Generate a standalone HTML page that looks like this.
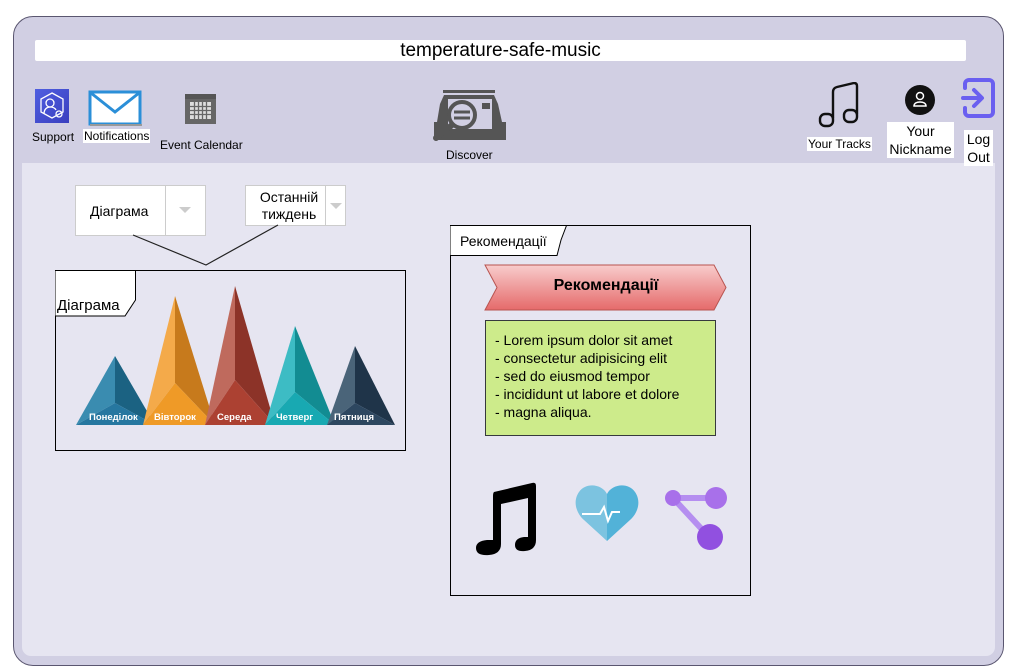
<!DOCTYPE html>
<html><head><meta charset="utf-8"><style>
*{margin:0;padding:0;box-sizing:border-box}
body{width:1010px;height:667px;background:#fff;position:relative;overflow:hidden;font-family:"Liberation Sans",Arial,sans-serif;color:#000}
.a{position:absolute}
.lbl{position:absolute;font-size:12px;white-space:nowrap}
</style></head><body>
<div class="a" style="left:13px;top:16px;width:991px;height:650px;background:#d1cfe3;border:1px solid #5a5670;border-radius:20px"></div>
<div class="a" style="left:22px;top:163px;width:973px;height:493px;background:#e6e5f1;border-radius:0 0 9px 9px"></div>
<div class="a" style="left:35px;top:40px;width:931px;height:21px;background:#fff;border-radius:2px;text-align:center;font-size:19px;line-height:21px">temperature-safe-music</div>

<!-- Support icon -->
<div class="a" style="left:35px;top:89px;width:34px;height:34px;background:linear-gradient(135deg,#4f5fe0,#3a3fbf)"></div>
<svg class="a" style="left:35px;top:89px" width="34" height="34" viewBox="0 0 34 34" fill="none" stroke="#fff" stroke-width="1.3"><polygon points="17,4 28,10 28,23 17,29 6,23 6,10"/><circle cx="15" cy="14" r="4"/><path d="M9 25c0-5 3-7 6-7s5 1 6 3"/><circle cx="24" cy="25" r="3"/></svg>
<div class="lbl" style="left:32px;top:130px">Support</div>
<!-- envelope -->
<svg class="a" style="left:88px;top:90px" width="54" height="36" viewBox="0 0 54 36"><rect x="2" y="2" width="50" height="32" fill="#fff" stroke="#2b8fd8" stroke-width="3"/><path d="M3 3 L27 22 L51 3" fill="none" stroke="#2b8fd8" stroke-width="3"/><rect x="2" y="34" width="52" height="2" fill="#999"/></svg>
<div class="lbl" style="left:83px;top:129px;background:#fff;padding:0 1px">Notifications</div>
<!-- calendar -->
<svg class="a" style="left:185px;top:94px" width="31" height="30" viewBox="0 0 31 30"><rect x="0" y="0" width="31" height="30" fill="#666"/><rect x="0" y="0" width="31" height="5" fill="#555"/><g fill="#ddd"><rect x="5" y="8" width="21" height="17"/></g><g stroke="#666" stroke-width="1.3"><path d="M5 12.5h21M5 16.5h21M5 20.5h21M9.5 8v17M13.5 8v17M17.5 8v17M21.5 8v17"/></g></svg>
<div class="lbl" style="left:160px;top:138px">Event Calendar</div>
<!-- discover -->
<svg class="a" style="left:430px;top:90px" width="78" height="54" viewBox="0 0 78 54"><rect x="13" y="0" width="52" height="3" fill="#555"/><path d="M10 14 L14 5 H64 L68 14 L76 50 H4z" fill="#555"/><rect x="18" y="9" width="44" height="30" fill="#d1cfe3"/><rect x="52" y="13" width="8" height="6" fill="#555"/><path d="M4 32 L4 50 L76 50 L76 32 L64 32 L64 40 L14 40 L14 32z" fill="#555"/><circle cx="32" cy="25" r="13" fill="#d1cfe3" stroke="#555" stroke-width="4"/><path d="M24 22h16M24 28h16" stroke="#555" stroke-width="3"/><path d="M22 35 L6 48" stroke="#555" stroke-width="6" stroke-linecap="round"/></svg>
<div class="lbl" style="left:446px;top:148px">Discover</div>

<!-- right icons -->
<svg class="a" style="left:818px;top:82px" width="42" height="48" viewBox="0 0 42 48" fill="none" stroke="#111" stroke-width="2.4"><path d="M15 36V10Q15 6 19 5L36 1Q39 1 39 4V32"/><rect x="2" y="32" width="13" height="12" rx="5"/><rect x="26" y="28" width="13" height="12" rx="5"/></svg>
<div class="lbl" style="left:807px;top:137px;background:#fff;padding:0 1px">Your Tracks</div>
<svg class="a" style="left:905px;top:85px" width="30" height="30" viewBox="0 0 30 30"><circle cx="15" cy="15" r="15" fill="#111"/><circle cx="15" cy="11" r="3.5" fill="none" stroke="#fff" stroke-width="1.5"/><path d="M9 21c0-3 3-4 6-4s6 1 6 4z" fill="none" stroke="#fff" stroke-width="1.5"/></svg>
<div class="a" style="left:887px;top:122px;width:67px;height:36px;background:#fff;text-align:center;font-size:14px;line-height:18px">Your<br>Nickname</div>
<svg class="a" style="left:961px;top:78px" width="36" height="42" viewBox="0 0 36 42" fill="none" stroke="#6a5ff0" stroke-width="4" stroke-linecap="round" stroke-linejoin="round"><path d="M4 10V6a4 4 0 0 1 4-4h20a4 4 0 0 1 4 4v28a4 4 0 0 1-4 4H8a4 4 0 0 1-4-4v-4"/><path d="M2 20h18M13 12l8 8-8 8"/></svg>
<div class="a" style="left:964px;top:130px;width:29px;height:36px;background:#fff;text-align:center;font-size:14px;line-height:18px">Log<br>Out</div>

<!-- dropdowns -->
<div class="a" style="left:75px;top:185px;width:131px;height:51px;background:#fff;border:1px solid #ccc"></div>
<div class="a" style="left:165px;top:185px;width:1px;height:51px;background:#ccc"></div>
<div class="lbl" style="left:90px;top:203px;font-size:14px">Діаграма</div>
<svg class="a" style="left:179px;top:207px" width="12" height="6"><path d="M0 0h12L6 6z" fill="#ccc"/></svg>
<div class="a" style="left:245px;top:185px;width:101px;height:41px;background:#fff;border:1px solid #ccc"></div>
<div class="a" style="left:325px;top:185px;width:1px;height:41px;background:#ccc"></div>
<div class="a" style="left:250px;top:189px;width:78px;text-align:center;font-size:14px;line-height:17px">Останній<br>тиждень</div>
<svg class="a" style="left:330px;top:203px" width="12" height="6"><path d="M0 0h12L6 6z" fill="#ccc"/></svg>
<svg class="a" style="left:0;top:0" width="400" height="280"><path d="M133 235 L206 265 L278 225" fill="none" stroke="#222" stroke-width="1.2"/></svg>

<!-- chart panel -->
<div class="a" style="left:55px;top:270px;width:351px;height:181px;border:1px solid #000"></div>
<svg class="a" style="left:55px;top:270px" width="82" height="47"><path d="M0.5 0.5H80.5V30L70 46H0.5" fill="#fff" stroke="#000"/></svg>
<div class="lbl" style="left:57px;top:297px;font-size:15px">Діаграма</div>
<svg class="a" style="left:0;top:0" width="420" height="440">
<g>
<polygon points="115,356 76,425 115,403" fill="#3a8cb0"/><polygon points="115,356 155,425 115,403" fill="#1b6282"/><polygon points="76,425 115,403 155,425" fill="#2677a0"/>
<polygon points="175,296 143,425 175,383" fill="#f4aa4a"/><polygon points="175,296 215,425 175,383" fill="#c77a1c"/><polygon points="143,425 175,383 215,425" fill="#ef9a27"/>
<polygon points="235,286 205,425 235,380" fill="#bf6a5d"/><polygon points="235,286 275,425 235,380" fill="#8c3328"/><polygon points="205,425 235,380 275,425" fill="#ac4132"/>
<polygon points="295,326 265,425 295,392" fill="#3dbcc4"/><polygon points="295,326 335,425 295,392" fill="#128c92"/><polygon points="265,425 295,392 335,425" fill="#18a9b2"/>
<polygon points="355,346 327,425 355,403" fill="#4a6479"/><polygon points="355,346 395,425 355,403" fill="#1f3449"/><polygon points="327,425 355,403 395,425" fill="#2d4760"/>
</g>
<g font-family="Liberation Sans,Arial,sans-serif" font-size="9.5" font-weight="bold" fill="#fff">
<text x="89" y="420">Понеділок</text><text x="154" y="420">Вівторок</text><text x="217" y="420">Середа</text><text x="276" y="420">Четверг</text><text x="334" y="420">Пятниця</text></g>
</svg>

<!-- recommendations panel -->
<div class="a" style="left:450px;top:225px;width:301px;height:371px;border:1px solid #000"></div>
<svg class="a" style="left:450px;top:225px" width="118" height="31"><path d="M0.5 0.5H116.5L111 15 L107 30.5H0.5" fill="#fff" stroke="#000"/></svg>
<div class="lbl" style="left:460px;top:233px;font-size:14px">Рекомендації</div>
<svg class="a" style="left:484px;top:264px" width="244" height="48"><defs><linearGradient id="g" x1="0" y1="0" x2="0" y2="1"><stop offset="0" stop-color="#f8cccc"/><stop offset="1" stop-color="#e56a6a"/></linearGradient></defs><path d="M1 1H230L242 23.5L230 46H1L13 23.5z" fill="url(#g)" stroke="#b85450"/></svg>
<div class="a" style="left:484px;top:277px;width:244px;text-align:center;font-weight:bold;font-size:16px">Рекомендації</div>
<div class="a" style="left:485px;top:320px;width:231px;height:116px;background:#cdeb8b;border:1px solid #36393d;padding:10px 0 0 9px;font-size:14px;line-height:18px">- Lorem ipsum dolor sit amet<br>- consectetur adipisicing elit<br>- sed do eiusmod tempor<br>- incididunt ut labore et dolore<br>- magna aliqua.</div>

<!-- bottom icons -->
<svg class="a" style="left:472px;top:482px" width="66" height="74" viewBox="0 0 66 74"><path d="M22 10 L60 1 Q64 0 64 4 V58 Q64 68 53 69 Q43 70 43 63 Q43 56 52 55 L56 55 V16 L29 22 V62 Q29 72 17 73 Q4 74 4 66 Q4 59 15 58 L21 58 V14 Q21 11 22 10z" fill="#000"/></svg>
<svg class="a" style="left:574px;top:484px" width="66" height="58" viewBox="0 0 66 58"><path d="M33 10 C28 0 12 -2 5 8 C-2 18 3 30 10 36 L33 57 Z" fill="#7cc3e0"/><path d="M33 10 C38 0 54 -2 61 8 C68 18 63 30 56 36 L33 57 Z" fill="#52b2d8"/><path d="M8 30 H26 L30 23 L34 37 L38 28 H46" fill="none" stroke="#fff" stroke-width="2"/></svg>
<svg class="a" style="left:664px;top:486px" width="70" height="66" viewBox="0 0 70 66"><path d="M9 12 H45 M9 12 L45 51" stroke="#b58ef0" stroke-width="6"/><circle cx="9" cy="12" r="8" fill="#a870ea"/><circle cx="52" cy="12" r="11" fill="#a870ea"/><circle cx="46" cy="51" r="13" fill="#9150e0"/></svg>
</body></html>
